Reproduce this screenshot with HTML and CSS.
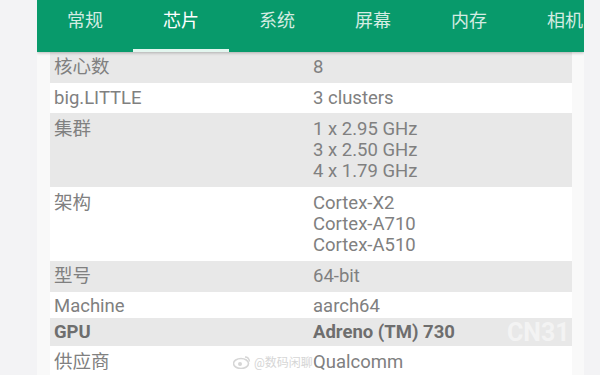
FILE: index.html
```html
<!DOCTYPE html>
<html lang="zh-CN">
<head>
    <meta charset="UTF-8">
    <meta name="viewport" content="width=device-width, initial-scale=1.0">
    <title>芯片</title>
    <link rel="stylesheet" href="styles.css">
</head>
<body>

    <div class="screen">
        <!-- Tabs -->
        <header class="tabs">
            <div class="tab">常规</div>
            <div class="tab active">芯片</div>
            <div class="tab">系统</div>
            <div class="tab">屏幕</div>
            <div class="tab">内存</div>
            <div class="tab">相机</div>
        </header>

        <!-- Chip info -->
        <div class="list">
            <div class="row gray r1">
                <div class="label">核心数</div>
                <div class="value">8</div>
            </div>
            <div class="row r2">
                <div class="label">big.LITTLE</div>
                <div class="value">3 clusters</div>
            </div>
            <div class="row gray r3">
                <div class="label">集群</div>
                <div class="value">1 x 2.95 GHz<br>3 x 2.50 GHz<br>4 x 1.79 GHz</div>
            </div>
            <div class="row r3">
                <div class="label">架构</div>
                <div class="value">Cortex-X2<br>Cortex-A710<br>Cortex-A510</div>
            </div>
            <div class="row gray r1">
                <div class="label">型号</div>
                <div class="value">64-bit</div>
            </div>
            <div class="row r6">
                <div class="label">Machine</div>
                <div class="value">aarch64</div>
            </div>
            <div class="row gray r7 bold">
                <div class="label">GPU</div>
                <div class="value">Adreno (TM) 730</div>
            </div>
            <div class="row r8">
                <div class="label">供应商</div>
                <div class="value">Qualcomm</div>
            </div>
        </div>

        <!-- Watermark -->
        <div class="mark-cn">CN31</div>
        <div class="mark-weibo">
            <svg width="18" height="14" viewBox="0 0 18 14">
                <ellipse cx="8" cy="8.5" rx="7.5" ry="5" fill="none" stroke="#d6d6d6" stroke-width="1.6"/>
                <circle cx="7" cy="9" r="2" fill="#d6d6d6"/>
                <path d="M12 2 q4 0 4.5 4.5" fill="none" stroke="#d6d6d6" stroke-width="1.4"/>
            </svg>
            <span>@数码闲聊</span>
        </div>
    </div>

</body>
</html>
```

FILE: styles.css
```css
body {
    margin: 0;
    padding: 0;
    background-color: #f3f3f5;
    font-family: Roboto, "Noto Sans CJK SC", sans-serif;
    overflow: hidden;
}
.screen {
    position: relative;
    margin-left: 37px;
    width: 547px;
    height: 375px;
    overflow: hidden;
    background-color: #f9f9f9;
}
.tabs {
    display: flex;
    height: 52px;
    background-color: #089a6b;
    box-shadow: 0 1px 3px rgba(0, 0, 0, 0.25);
    position: relative;
    z-index: 1;
}
.tab {
    flex: 0 0 96px;
    text-align: center;
    font-size: 18px;
    line-height: 42px;
    color: #d4ece2;
    white-space: nowrap;
}
.tab.active {
    color: #ffffff;
    box-shadow: inset 0 -3px 0 #e3f6ef;
}
.list {
    margin: 0 12px 0 13px;
    color: #808080;
    font-size: 18.5px;
    line-height: 21px;
}
.row {
    display: flex;
    background-color: #ffffff;
    padding: 5px 0 5px 4px;
}
.row.gray {
    background-color: #e8e8e8;
}
.r2 {
    padding-bottom: 4px;
}
.r3 {
    padding-top: 6px;
    padding-bottom: 5px;
}
.r6 {
    padding-top: 4px;
    padding-bottom: 1px;
}
.r7 {
    padding-top: 4px;
    padding-bottom: 3px;
}
.r8 {
    padding-top: 6px;
    height: 22px;
}
.label {
    flex: 0 0 259px;
}
.value {
    flex: 1;
}
.bold {
    font-weight: bold;
    color: #6e6e6e;
}
.mark-cn {
    position: absolute;
    left: 470px;
    top: 318px;
    font-family: Roboto, sans-serif;
    font-size: 25px;
    font-weight: bold;
    color: rgba(255, 255, 255, 0.5);
}
.mark-weibo {
    position: absolute;
    left: 196px;
    top: 353px;
    display: flex;
    align-items: center;
    gap: 3px;
    font-size: 12px;
    color: #d6d6d6;
}
```
